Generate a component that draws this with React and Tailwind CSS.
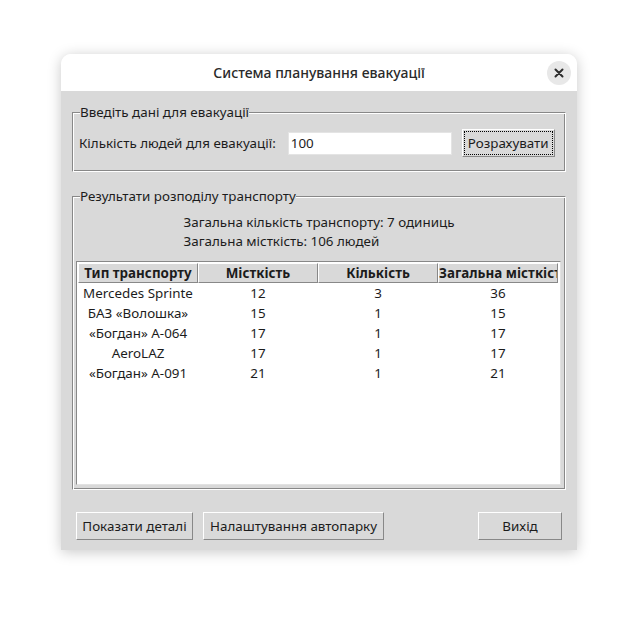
import React from "react";

const rows = [
  ["Mercedes Sprinte", "12", "3", "36"],
  ["БАЗ «Волошка»", "15", "1", "15"],
  ["«Богдан» А-064", "17", "1", "17"],
  ["AeroLAZ", "17", "1", "17"],
  ["«Богдан» А-091", "21", "1", "21"],
];

const headers = ["Тип транспорту", "Місткість", "Кількість", "Загальна місткість"];

function Btn({ children, className = "", focus = false }) {
  return (
    <button
      className={
        "h-[28px] bg-[#d9d9d9] border border-t-white border-l-white border-r-[#888888] border-b-[#888888] text-[13.4px] text-[#1c1c1c] flex items-center justify-center px-[2px] " +
        className
      }
    >
      {focus ? (
        <span className="outline outline-1 outline-dotted outline-black w-full h-[22px] flex items-center justify-center">
          {children}
        </span>
      ) : (
        children
      )}
    </button>
  );
}

export default function App() {
  return (
    <div
      className="w-[638px] h-[618px] bg-white pt-[54px] pl-[61px]"
      style={{ fontFamily: '"Noto Sans", "DejaVu Sans", sans-serif' }}
    >
      <div className="w-[516px] h-[496px] rounded-t-[10px] flex flex-col shadow-[0_2px_14px_rgba(0,0,0,0.22)] overflow-hidden">
        <div className="h-[37px] bg-white relative flex items-center justify-center shrink-0">
          <span className="text-[14px] font-medium text-[#2a2a2a]">Система планування евакуації</span>
          <span className="absolute right-[6px] top-[7px] w-[24px] h-[24px] rounded-full bg-[#e8e8e8] flex items-center justify-center">
            <svg width="10" height="10" viewBox="0 0 10 10">
              <path d="M1.5 1.5 L8.5 8.5 M8.5 1.5 L1.5 8.5" stroke="#2e2e2e" strokeWidth="2" strokeLinecap="round" />
            </svg>
          </span>
        </div>
        <div className="flex-1 bg-[#d9d9d9] px-[11px] pt-[12px] flex flex-col text-[13.4px] text-[#1c1c1c]">
          <fieldset className="border border-t-[#888888] border-l-[#888888] border-b-white border-r-white shadow-[inset_1px_1px_0_#ffffff,inset_-1px_-1px_0_#888888] pl-[6px] pr-[8px] pt-[8px] pb-[14px] m-0 min-w-0">
            <legend className="px-0 ml-[1px] leading-[18px] bg-[#d9d9d9]">Введіть дані для евакуації</legend>
            <div className="flex items-center">
              <span className="mr-[12px] leading-[18px]">Кількість людей для евакуації:</span>
              <div className="w-[164px] h-[23px] bg-white border border-[#e4e4e4] flex items-center pl-[2px]">100</div>
              <Btn className="ml-[10px] w-[93px]" focus>
                Розрахувати
              </Btn>
            </div>
          </fieldset>
          <fieldset className="mt-[15px] border border-t-[#888888] border-l-[#888888] border-b-white border-r-white shadow-[inset_1px_1px_0_#ffffff,inset_-1px_-1px_0_#888888] pl-[3px] pr-[4px] pt-[8px] pb-[4px] m-0 min-w-0">
            <legend className="px-0 ml-[4px] leading-[18px] bg-[#d9d9d9]">Результати розподілу транспорту</legend>
            <div className="flex flex-col items-center">
              <div className="flex flex-col leading-[19px] pl-[1px]">
                <span>Загальна кількість транспорту: 7 одиниць</span>
                <span>Загальна місткість: 106 людей</span>
              </div>
            </div>
            <div className="mt-[10px] h-[224px] bg-white border border-t-[#888888] border-l-[#888888] border-r-[#e2e2e2] border-b-[#e2e2e2] pl-[1px] pt-[1px] overflow-hidden">
              <div className="flex">
                {headers.map((h) => (
                  <div
                    key={h}
                    className="w-[120px] h-[20px] shrink-0 bg-[#d9d9d9] border border-t-white border-l-white border-r-[#888888] border-b-[#888888] font-bold text-center leading-[18px] whitespace-nowrap overflow-hidden"
                  >
                    {h}
                  </div>
                ))}
              </div>
              <div>
                {rows.map((r, i) => (
                  <div key={i} className="flex h-[20px] items-center">
                    {r.map((c, j) => (
                      <div key={j} className="w-[120px] shrink-0 px-[4px]">
                        <div className="text-center whitespace-nowrap overflow-hidden leading-[20px]">{c}</div>
                      </div>
                    ))}
                  </div>
                ))}
              </div>
            </div>
          </fieldset>
          <div className="mt-[22px] flex px-[4px]">
            <Btn className="w-[117px]">Показати деталі</Btn>
            <Btn className="ml-[10px] w-[181px]">Налаштування автопарку</Btn>
            <Btn className="ml-auto w-[84px]">Вихід</Btn>
          </div>
        </div>
      </div>
    </div>
  );
}
